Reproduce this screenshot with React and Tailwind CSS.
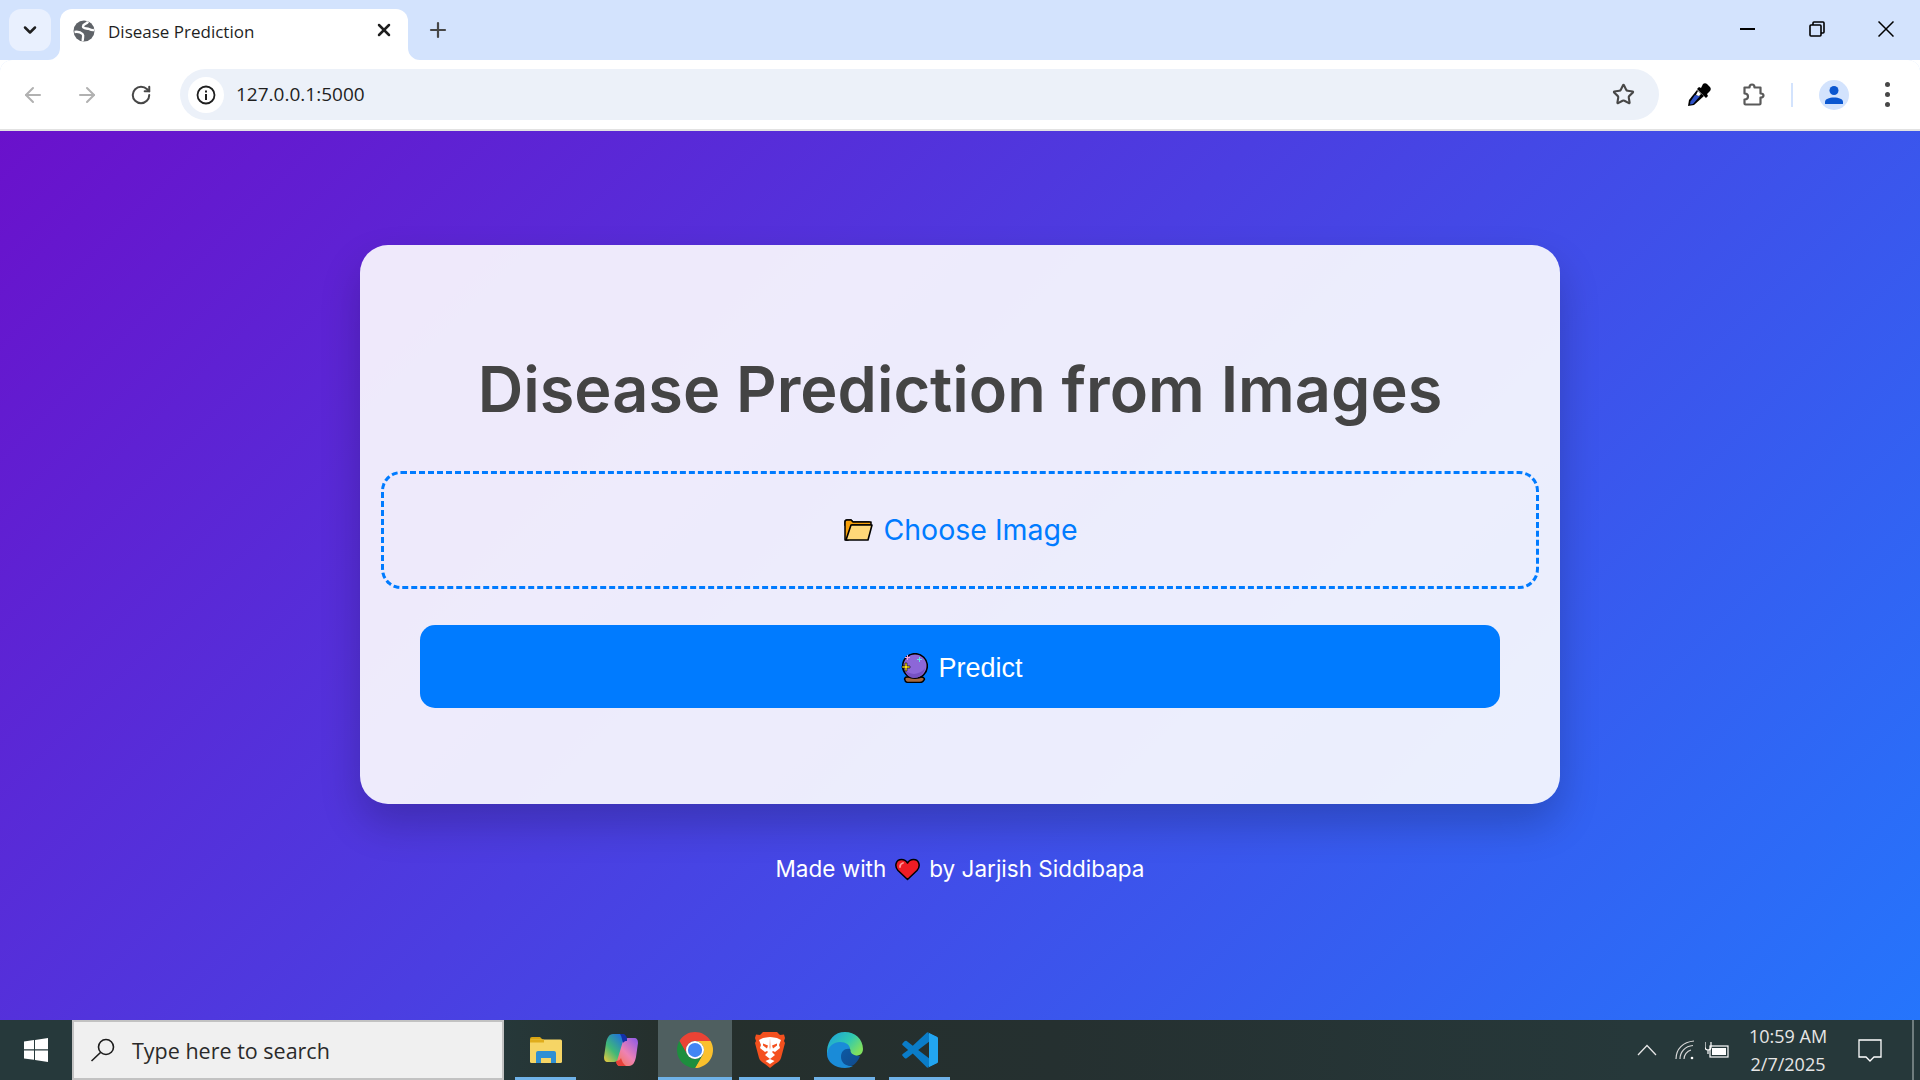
import React from 'react'
import { ArrowLeft, ArrowRight, RotateCw, Star, ChevronDown, X, Plus } from 'lucide-react'

const ui = { fontFamily: '"Open Sans", "Noto Sans", sans-serif' }
const poppins = { fontFamily: 'Inter, "Noto Sans", sans-serif' }

function TabFlare({ side }) {
  return (
    <svg
      width="12"
      height="12"
      viewBox="0 0 12 12"
      className={side === 'left' ? 'absolute bottom-0 -left-3' : 'absolute bottom-0 -right-3'}
    >
      <path d={side === 'left' ? 'M12 0V12H0A12 12 0 0 0 12 0Z' : 'M0 0V12H12A12 12 0 0 1 0 0Z'} fill="#fff" />
    </svg>
  )
}

function Globe() {
  return (
    <svg width="22" height="22" viewBox="0 0 22 22">
      <circle cx="11" cy="11" r="10.500" fill="#5f6368" />
      <path d="M15 1.500c-1 3-5 2-5 5 0 2.500 4 1.500 6 2.500s3 1.500 5 1" fill="none" stroke="#fff" strokeWidth="2.400" />
      <path d="M1.500 12c3-.5 6 0 8 2s-.5 4 .5 7" fill="none" stroke="#fff" strokeWidth="2.400" />
    </svg>
  )
}

function Eyedropper() {
  return (
    <svg width="26" height="26" viewBox="0 0 26 26">
      <path d="M17 2c1-1 3-1 4 0l3 3c1 1 1 3 0 4l-3 3 1 2-2 2-9-9 2-2 2 1Z" fill="#000" />
      <path d="M11 8 3 18l-1 6 6-1L18 14Z" fill="#000" />
      <path d="M9 13l5 1-7 8-3 .5.5-3Z" fill="#2f52c8" />
      <path d="M12 9l3 3-2 2-3-1Z" fill="#fff" />
    </svg>
  )
}

function Puzzle() {
  return (
    <svg width="24" height="24" viewBox="0 0 24 24" fill="none" stroke="#5a5a5a" strokeWidth="2.200" strokeLinejoin="round">
      <path d="M2.500 4.500h5c0-1.500.5-3 2.500-3s2.500 1.500 2.500 3h6v6c1.500 0 3 .5 3 2s-1.500 2-3 2v6a1 1 0 0 1-1 1H3.500a1 1 0 0 1-1-1v-4c2 0 3.500-1 3.500-3s-1.500-3-3.500-3Z" />
    </svg>
  )
}

function WinLogo() {
  return (
    <svg width="24" height="24" viewBox="0 0 24 24" fill="#fff">
      <path d="M0 3.400 10 2v9.300H0ZM11 1.900 24 0v11.300H11ZM0 12.400h10v9.400L0 20.500ZM11 12.400h13V24l-13-1.900Z" />
    </svg>
  )
}

function FolderApp() {
  return (
    <svg width="32" height="28" viewBox="0 0 32 28">
      <path d="M0 3a2 2 0 0 1 2-2h8l3 3h-13Z" fill="#d9a514" />
      <rect x="0" y="3.500" width="32" height="23.500" rx="1.500" fill="#f6d565" />
      <rect x="0" y="3.500" width="14" height="3" fill="#e0ad1c" />
      <path d="M6 27V17a2 2 0 0 1 2-2h16a2 2 0 0 1 2 2v10h-5v-5H11v5Z" fill="#2f8fd3" />
      <rect x="11" y="22" width="10" height="5" fill="#f6d565" />
    </svg>
  )
}

function Copilot() {
  return (
    <svg width="34" height="32" viewBox="0 0 34 32">
      <defs>
        <linearGradient id="cp1" x1="0" y1="1" x2=".8" y2="0">
          <stop offset="0" stopColor="#f3c93a" />
          <stop offset=".45" stopColor="#3fb878" />
          <stop offset="1" stopColor="#1e6ee0" />
        </linearGradient>
        <linearGradient id="cp2" x1="0" y1="1" x2=".8" y2="0">
          <stop offset="0" stopColor="#f4754a" />
          <stop offset=".5" stopColor="#ee82b4" />
          <stop offset="1" stopColor="#9a5fe0" />
        </linearGradient>
      </defs>
      <path d="M9 0h9c3 0 4 3 3 5l-6 20c-1 2-3 3-5 3H4c-3 0-4-2-4-5l2-14c1-5 3-9 7-9Z" fill="url(#cp1)" />
      <path d="M25 32h-9c-3 0-4-3-3-5l6-20c1-2 3-3 5-3h6c3 0 4 2 4 5l-2 14c-1 5-3 9-7 9Z" fill="url(#cp2)" />
      <path d="M16 0h2c3 0 5 2 5 5v2c-2 0-3 .5-4 2-1-3-1-6-3-9Z" fill="#1330a8" />
      <path d="M12 27c3 0 4-1 5-3 1 3 2 6 5 8h-6c-2 0-4-2-4-5Z" fill="#e8403a" />
    </svg>
  )
}

function ChromeLogo() {
  return (
    <svg width="36" height="36" viewBox="0 0 48 48">
      <path d="M24 12h20.780A24 24 0 0 0 3.220 12L13.600 30A12 12 0 0 1 24 12Z" fill="#ea4335" />
      <path d="M24 48A24 24 0 0 0 44.780 12H24A12 12 0 0 1 34.390 30Z" fill="#fbc02d" />
      <path d="M3.220 12A24 24 0 0 0 24 48L34.390 30A12 12 0 0 1 13.600 30Z" fill="#1e8e3e" />
      <circle cx="24" cy="24" r="12" fill="#fff" />
      <circle cx="24" cy="24" r="9.500" fill="#4285f4" />
    </svg>
  )
}

function Brave() {
  return (
    <svg width="30" height="36" viewBox="0 0 30 36">
      <path d="M8 0h14l3 3 4-.5L30 6l-1 3 1 2-4 15c-1 3-3 4-6 6l-5 4-5-4c-3-2-5-3-6-6L0 11l1-2-1-3 1-3.500L5 3Z" fill="#f4501e" />
      <path d="M15 5c3 0 5 1 7 1l4 2-2 5 1 3-5 4-2-1-1 1 3 3-5 4-5-4 3-3-1-1-2 1-5-4 1-3-2-5 4-2c2 0 4-1 7-1Z" fill="#fff" />
      <path d="M8 11.500l5 2-1 3-4-3ZM22 11.500l-5 2 1 3 4-3Z" fill="#f4501e" />
      <path d="M15 6l-1 9 1 3 1-3Z" fill="#f4501e" opacity=".35" />
      <path d="M10.500 29l4.500-2 4.500 2-4.500 3Z" fill="#fff" />
    </svg>
  )
}

function Edge() {
  return (
    <svg width="36" height="36" viewBox="0 0 36 36">
      <defs>
        <linearGradient id="ed1" x1="0" y1="0" x2="1" y2=".6">
          <stop offset="0" stopColor="#1b9de2" />
          <stop offset=".6" stopColor="#30c9b0" />
          <stop offset="1" stopColor="#7fe05f" />
        </linearGradient>
        <linearGradient id="ed2" x1="0" y1="0" x2="1" y2="1">
          <stop offset="0" stopColor="#0c59a4" />
          <stop offset="1" stopColor="#114a8b" />
        </linearGradient>
      </defs>
      <path d="M18 0C28 0 36 7 36 17c0 5-4 7-8 7-3 0-6-1-7-2 2-1 3-3 2-5-2-4-6-6-11-5C6 13 1 18 0 24-1 10 6 0 18 0Z" fill="url(#ed1)" />
      <path d="M0 22C1 14 7 10 13 10c6 0 10 3 10 7-3 0-8 2-8 8 0 5 4 9 11 9-2 1-5 2-8 2C8 36 0 30 0 22Z" fill="#1a8bd8" />
      <path d="M14 25c0-6 4-9 9-8 0 3 2 7 10 7-2 6-7 10-9 10-6 0-10-4-10-9Z" fill="url(#ed2)" />
    </svg>
  )
}

function VsCode() {
  return (
    <svg width="36" height="36" viewBox="0 0 100 100">
      <path d="M70 1 75 5v90l-5 4L30 60 13 73c-2 1-4 1-6-1l-5-5c-2-2-2-4 0-6l15-11L2 37c-2-2-2-4 0-6l5-5c2-2 4-2 6-1l17 13Z" fill="#0a7cc8" />
      <path d="M75 27 45 50l30 23Z" fill="#252f2c" />
      <path d="M70 1 96 13c2 1 4 3 4 6v62c0 3-2 5-4 6L70 99c3 1 5-1 5-4V5c0-3-2-5-5-4Z" fill="#1f9cf0" />
      <path d="M75 3 96 13c2 1 4 3 4 6v62c0 3-2 5-4 6L75 97Z" fill="#22a5f1" />
    </svg>
  )
}

function TaskIcon({ active, running = true, children }) {
  return (
    <div className={active ? 'relative flex h-[60px] w-[74px] items-center justify-center bg-[#4f5f60]' : 'relative flex h-[60px] w-[75px] items-center justify-center'}>
      {children}
      {running && <div className={active ? 'absolute bottom-0 inset-x-0 h-[3px] bg-[#6fb2e8]' : 'absolute bottom-0 left-[7px] h-[3px] w-[61px] bg-[#6fb2e8]'} />}
    </div>
  )
}

function FolderEmoji() {
  return (
    <svg width="29" height="22" viewBox="0 0 29 22">
      <path d="M1 3a2 2 0 0 1 2-2h4l2 2h16v3H1Z" fill="#1f9ad6" stroke="#000" strokeWidth="1.500" />
      <path d="M1 3v18h3L8 6h19V3H9L7 1H3a2 2 0 0 0-2 2Z" fill="#f59f0a" stroke="#000" strokeWidth="1.500" strokeLinejoin="round" />
      <path d="M7 6h21l-4 15H2Z" fill="#ffd878" stroke="#000" strokeWidth="1.600" strokeLinejoin="round" />
    </svg>
  )
}

function CrystalBall() {
  return (
    <svg width="28" height="30" viewBox="0 0 28 30">
      <path d="M7 24h14c3 0 4 2 3 3-1 2-2 2.500-4 2.500H9C7 29.500 5 29 5 27c-1-1 0-3 2-3Z" fill="#a6693f" stroke="#000" strokeWidth="1.500" />
      <circle cx="15" cy="13" r="12.300" fill="#8c67d8" stroke="#000" strokeWidth="1.600" />
      <path d="M5 17c4 5 14 6 20-2-1 6-6 10-11 10-4 0-8-3-9-8Z" fill="#7652c2" />
      <path d="M17 6h2V4h1v2h2v1h-2v2h-1V7h-2Z" fill="#62e6ea" />
      <path d="M5 15H2v-2h3v-3h2v3h3v2H7v3H5Z" fill="#ffe11a" stroke="#000" strokeWidth=".6" />
      <path d="M5 4h2V2h1v2h2v1H8v2H7V5H5Z" fill="#f7a6d8" />
    </svg>
  )
}

function Heart() {
  return (
    <svg width="25" height="23" viewBox="0 0 25 23">
      <path d="M12.500 21.500 3 12.500C-1 8 1 1.500 6.500 1.500c2.500 0 4.500 1 6 3.500 1.500-2.500 3.500-3.500 6-3.500 5.500 0 7.500 6.500 3.500 11Z" fill="#ee1c25" stroke="#000" strokeWidth="1.500" strokeLinejoin="round" />
      <path d="M5 9c0-2 1-3.500 3-4" fill="none" stroke="#ff9a9a" strokeWidth="1.800" strokeLinecap="round" />
    </svg>
  )
}

export default function App() {
  return (
    <div className="flex h-[1080px] w-[1920px] flex-col overflow-hidden" style={ui}>
      {/* tab strip */}
      <div className="flex h-[60px] shrink-0 bg-[#d3e3fd]">
        <div className="ml-[9px] mt-[9px] flex h-[42px] w-[42px] items-center justify-center rounded-xl bg-[#e9f0fe]">
          <ChevronDown size={20} strokeWidth={3} color="#1f1f1f" />
        </div>
        <div className="relative ml-[9px] mt-[9px] flex h-[51px] w-[348px] items-start rounded-t-[12px] bg-white pl-[13px] pt-[11px]">
          <TabFlare side="left" />
          <Globe />
          <span className="ml-[13px] text-[17px] leading-[24px] text-[#1f1f1f]">Disease Prediction</span>
          <X size={20} strokeWidth={3} color="#1f1f1f" className="absolute right-[14px] top-[11px]" />
          <TabFlare side="right" />
        </div>
        <div className="ml-[18px] mt-[18px]">
          <Plus size={24} strokeWidth={2.2} color="#474747" />
        </div>
        <div className="ml-auto flex">
          <div className="flex h-[58px] w-[70px] items-center justify-center">
            <div className="h-[2px] w-[15px] bg-black" />
          </div>
          <div className="flex h-[58px] w-[70px] items-center justify-center">
            <svg width="16" height="16" viewBox="0 0 16 16" fill="none" stroke="#000" strokeWidth="1.600">
              <rect x="1" y="4" width="11" height="11" rx="1" />
              <path d="M4 4V2a1 1 0 0 1 1-1h9a1 1 0 0 1 1 1v9a1 1 0 0 1-1 1h-2" />
            </svg>
          </div>
          <div className="flex h-[58px] w-[68px] items-center justify-center">
            <svg width="16" height="16" viewBox="0 0 16 16" stroke="#000" strokeWidth="1.500">
              <path d="M.5.5l15 15M15.500.5l-15 15" />
            </svg>
          </div>
        </div>
      </div>

      {/* toolbar */}
      <div className="flex h-[71px] shrink-0 items-start rounded-t-[12px] border-b-2 border-[#e2e2e2] bg-[#d3e3fd]">
        <div className="flex h-[69px] w-full items-center rounded-t-[12px] bg-white">
          <ArrowLeft size={24} strokeWidth={2} color="#b1b1b1" className="ml-[21px]" />
          <ArrowRight size={24} strokeWidth={2} color="#b1b1b1" className="ml-[30px]" />
          <RotateCw size={22} strokeWidth={2.2} color="#474747" className="ml-[31px]" />
          <div className="ml-[28px] flex h-[51px] w-[1479px] items-center rounded-full bg-[#ecf1f9] pl-[8px] pr-[24px]">
            <div className="flex h-[36px] w-[36px] items-center justify-center rounded-full bg-white">
              <svg width="20" height="20" viewBox="0 0 20 20">
                <circle cx="10" cy="10" r="8.500" fill="none" stroke="#1f1f1f" strokeWidth="1.800" />
                <rect x="9" y="9" width="2" height="6" fill="#1f1f1f" />
                <rect x="9" y="5.500" width="2" height="2" fill="#1f1f1f" />
              </svg>
            </div>
            <span className="ml-[12px] text-[19px] text-[#1f1f1f]">127.0.0.1:5000</span>
            <Star size={23} strokeWidth={2.2} color="#474747" className="ml-auto" />
          </div>
          <div className="ml-[27px]">
            <Eyedropper />
          </div>
          <div className="ml-[30px]">
            <Puzzle />
          </div>
          <div className="ml-[25px] h-[24px] w-[2px] bg-[#d3e3fd]" />
          <div className="ml-[26px] flex h-[30px] w-[30px] items-center justify-center overflow-hidden rounded-full bg-[#d3e3fd]">
            <svg width="20" height="20" viewBox="0 0 20 20" fill="#0b57d0">
              <circle cx="10" cy="5.500" r="4.500" />
              <path d="M1 19v-2c0-3 4-4.500 9-4.500s9 1.500 9 4.500v2Z" />
            </svg>
          </div>
          <div className="ml-[36px] flex flex-col gap-[5px]">
            <span className="h-[5px] w-[5px] rounded-full bg-[#474747]" />
            <span className="h-[5px] w-[5px] rounded-full bg-[#474747]" />
            <span className="h-[5px] w-[5px] rounded-full bg-[#474747]" />
          </div>
        </div>
      </div>

      {/* page */}
      <div className="flex flex-1 flex-col items-center bg-[linear-gradient(135deg,#6a11cb,#2575fc)] pt-[114px]">
        <div className="flex h-[559px] w-[1200px] flex-col items-center rounded-[28px] bg-white/90 px-[21px] pt-[107px] shadow-[0_20px_40px_rgba(0,0,0,0.2)]">
          <h1 className="text-[63px] font-semibold leading-[74px] text-[#444]" style={poppins}>
            Disease Prediction from Images
          </h1>
          <div className="mt-[45px] flex h-[118px] w-full items-center justify-center gap-[10px] rounded-[20px] border-[3px] border-dashed border-[#007bff] pl-[2px] text-[28.500px] text-[#007bff]" style={poppins}>
            <FolderEmoji />
            <span>Choose Image</span>
          </div>
          <div className="mt-[36px] flex h-[83px] w-[1080px] items-center justify-center gap-[10px] rounded-[15px] bg-[#007bff] pl-[3px] pt-[3px] text-[27px] text-white" style={{ fontFamily: '"Liberation Sans", Arial, sans-serif' }}>
            <CrystalBall />
            <span>Predict</span>
          </div>
        </div>
        <div className="mt-[51px] flex items-center gap-[9px] text-[22.500px] leading-[28px] text-white" style={poppins}>
          <span>Made with</span>
          <Heart />
          <span>by Jarjish Siddibapa</span>
        </div>
      </div>

      {/* taskbar */}
      <div className="flex h-[60px] shrink-0 items-stretch bg-[linear-gradient(90deg,#26393b_0%,#26393b_25%,#252f2c_35%,#253030_55%,#26383a_85%)]">
        <div className="flex w-[72px] items-center justify-center">
          <WinLogo />
        </div>
        <div className="flex w-[432px] items-center border-2 border-[#c2c2c2] bg-[#f0f0f0] pl-[16px]">
          <svg width="26" height="26" viewBox="0 0 26 26" fill="none" stroke="#1c1c1c" strokeWidth="1.600">
            <circle cx="16" cy="10" r="7.500" />
            <path d="M10.500 15.500 1.500 24" />
          </svg>
          <span className="ml-[16px] pt-[2px] text-[21.500px] text-[#2a2a2a]">Type here to search</span>
        </div>
        <div className="ml-[4px] flex">
          <TaskIcon><FolderApp /></TaskIcon>
          <TaskIcon running={false}><Copilot /></TaskIcon>
          <TaskIcon active><ChromeLogo /></TaskIcon>
          <TaskIcon><Brave /></TaskIcon>
          <TaskIcon><Edge /></TaskIcon>
          <TaskIcon><VsCode /></TaskIcon>
        </div>
        <div className="ml-auto flex items-center text-white">
          <svg width="20" height="12" viewBox="0 0 20 12" fill="none" stroke="#e6e6e6" strokeWidth="1.300">
            <path d="M1 11 10 1.500 19 11" />
          </svg>
          <svg width="20" height="20" viewBox="0 0 20 20" fill="none" stroke="#d8d8d8" strokeWidth="1.200" className="ml-[18px]">
            <path d="M1 19C1 9 8 2 19 1M5 19C5 12 10 6 18 5.500M9 19c0-4 3-8 7-9" />
            <circle cx="17" cy="18" r="1.300" fill="#fff" stroke="none" />
          </svg>
          <svg width="24" height="18" viewBox="0 0 24 18" fill="none" stroke="#fff" strokeWidth="1.200" className="ml-[10px]">
            <rect x="5" y="5" width="18" height="11" />
            <rect x="7" y="7" width="14" height="7" fill="#fff" stroke="none" />
            <path d="M0 1v5c0 2 1 3 3 3s3-1 3-3V1M3 9v4" />
          </svg>
          <div className="ml-[14px] flex w-[90px] flex-col items-center text-[18px] leading-[28px] text-[#e6e6e6]">
            <span>10:59 AM</span>
            <span>2/7/2025</span>
          </div>
          <svg width="24" height="24" viewBox="0 0 24 24" fill="none" stroke="#fff" strokeWidth="1.300" className="ml-[25px]">
            <path d="M1 2h22v17h-7l-4 4-4-4H1Z" />
          </svg>
          <div className="ml-[30px] mr-[6px] h-[60px] w-[2px] bg-[#707d7e]" />
        </div>
      </div>
    </div>
  )
}
